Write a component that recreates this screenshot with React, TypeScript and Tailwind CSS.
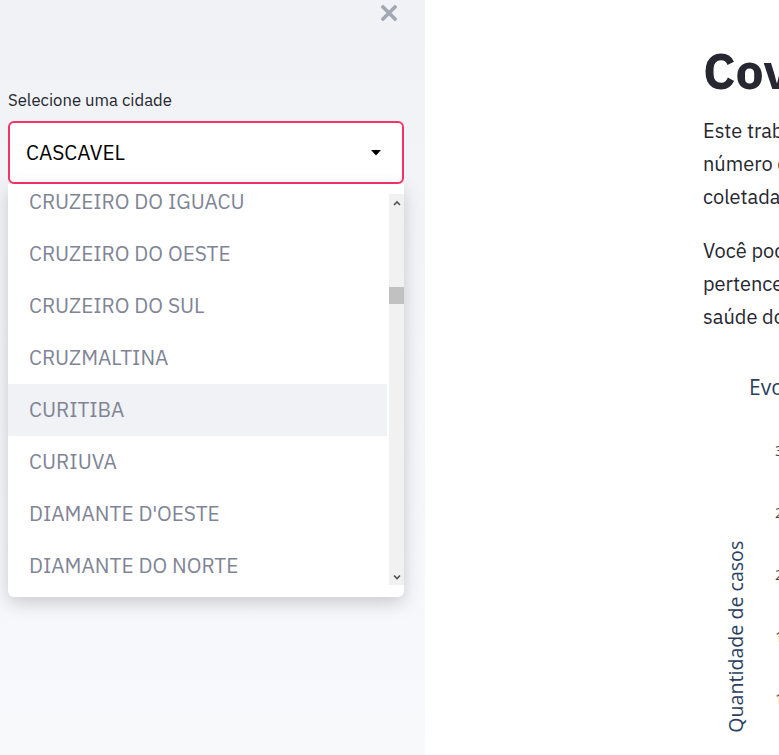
import React from "react";

const cities = [
  "CRUZEIRO DO IGUACU",
  "CRUZEIRO DO OESTE",
  "CRUZEIRO DO SUL",
  "CRUZMALTINA",
  "CURITIBA",
  "CURIUVA",
  "DIAMANTE D'OESTE",
  "DIAMANTE DO NORTE",
];

const plex = { fontFamily: '"IBM Plex Sans", Roboto, "Noto Sans", sans-serif' };

function Chevron({ up }: { up?: boolean }) {
  return (
    <svg width="8" height="6" viewBox="0 0 8 6" className="mx-auto">
      <path
        d={up ? "M1 5 L4 2 L7 5" : "M1 1.5 L4 4.5 L7 1.5"}
        stroke="#505050"
        strokeWidth="1.6"
        fill="none"
      />
    </svg>
  );
}

function CitySelect() {
  return (
    <div className="relative ml-[8px] mr-[21px] mt-[9px]">
      <div className="flex h-[63px] items-center justify-between rounded-[6px] border-2 border-[#f63366] bg-white pl-[16px] pr-[21px]">
        <span className="text-[20.8px] text-black">CASCAVEL</span>
        <svg width="10" height="6" viewBox="0 0 10 6">
          <path d="M0 0 H10 L5 5.5 Z" fill="#000" />
        </svg>
      </div>

      {/* open listbox */}
      <div className="absolute left-0 right-0 top-full z-10 rounded-b-[6px] bg-white pb-[12px] pt-[10px] shadow-[0_6px_18px_rgba(0,0,0,0.18)]">
        <div className="flex h-[391px]">
          <div className="flex-1 overflow-hidden">
            <ul className="mt-[-18px]">
              {cities.map((c) => (
                <li
                  key={c}
                  className={`flex h-[52px] items-center pl-[21px] text-[20.8px] text-[#808495] ${
                    c === "CURITIBA" ? "mr-[2px] bg-[#f0f2f6]" : ""
                  }`}
                >
                  {c}
                </li>
              ))}
            </ul>
          </div>
          <div className="flex w-[15px] flex-col bg-[#f1f1f1]">
            <div className="flex h-[17px] items-center">
              <Chevron up />
            </div>
            <div className="mt-[76px] h-[17px] bg-[#c1c1c1]" />
            <div className="flex-1" />
            <div className="flex h-[17px] items-center">
              <Chevron />
            </div>
          </div>
        </div>
      </div>
    </div>
  );
}

export default function App() {
  return (
    <div className="flex h-[755px] w-[779px] overflow-hidden bg-white" style={plex}>
      <aside className="w-[425px] shrink-0 bg-gradient-to-b from-[#f0f2f6] to-[#f8f9fb]">
        <div className="flex justify-end pr-[28px] pt-[5px]">
          <svg width="16" height="16" viewBox="0 0 16 16">
            <path d="M2 2 L14 14 M14 2 L2 14" stroke="#a3a8b4" strokeWidth="3.6" strokeLinecap="square" />
          </svg>
        </div>
        <label className="ml-[8px] mt-[67px] block text-[16.7px] leading-[24px] text-[#262730]">
          Selecione uma cidade
        </label>
        <CitySelect />
      </aside>

      <main className="min-w-0 flex-1 overflow-hidden">
        <div className="w-[760px] pl-[278px] text-[#262730]">
          <h1 className="mt-[40px] whitespace-nowrap text-[50px] font-bold leading-[62px]">
            Covid-19 no Paraná
          </h1>
          <p className="mt-[12px] whitespace-nowrap text-[20px] leading-[33px]">
            Este trabalho tem como objetivo mostrar a evolução do
            <br />
            número de casos de Covid-19 nas cidades do Paraná, com base em informações
            <br />
            coletadas pela Secretaria de Estado da Saúde.
          </p>
          <p className="mt-[21px] whitespace-nowrap text-[20px] leading-[33px]">
            Você pode selecionar uma cidade no menu lateral e ver a regional a qual ela
            <br />
            pertence, segundo a divisão feita pela Secretaria de Estado da
            <br />
            saúde do Paraná.
          </p>

          {/* chart */}
          <div
            className="mt-[40px] flex text-[#2a3f5f]"
            style={{ fontFamily: '"Open Sans", Verdana, Arial, sans-serif' }}
          >
            <div className="flex w-[46px] shrink-0 flex-col">
              <div className="h-[154px]" />
              <div className="ml-[33px] flex h-[220px] w-0 items-center justify-center">
                <span className="-rotate-90 whitespace-nowrap text-[19.6px]">Quantidade de casos</span>
              </div>
            </div>
            <div className="flex flex-col">
              <div className="whitespace-nowrap text-[21px] leading-[28px]">
                Evolução dos casos confirmados
              </div>
              <div className="ml-[26px] mt-[40px] flex flex-col gap-[43px] text-[15px] leading-[19px] text-[#444]">
                <span>300</span>
                <span>250</span>
                <span>200</span>
                <span>150</span>
                <span>100</span>
              </div>
            </div>
          </div>
        </div>
      </main>
    </div>
  );
}
